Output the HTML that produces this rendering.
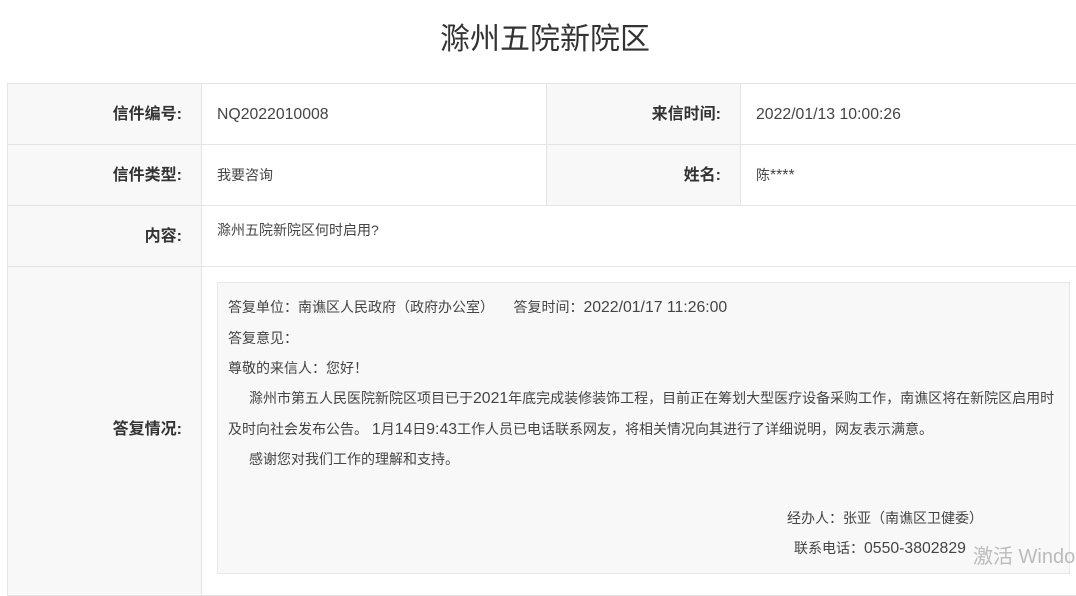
<!DOCTYPE html>
<html><head><meta charset="utf-8"><style>
*{margin:0;padding:0;box-sizing:border-box}
body{width:1076px;height:577px;overflow:hidden;background:#fff;position:relative;font-family:"Liberation Sans","Noto Sans CJK SC",sans-serif;color:#333}
.a{position:absolute;white-space:nowrap}
.t{left:0;width:1090px;top:18px;text-align:center;font-size:30px;color:#333;line-height:44px}
.l{background:#f8f8f9;border:1px solid #e4e4e6;position:absolute}
.v{background:#fff;border:1px solid #e4e4e6;position:absolute}
.lb{font-size:16px;font-weight:bold;text-align:right;color:#333;line-height:20px}
.vl{font-size:14px;color:#444;line-height:20px}
.n{font-size:15.8px}
</style></head><body>
<div class="a t">滁州五院新院区</div>
<div class="l" style="left:7px;top:83px;width:195px;height:62px"></div>
<div class="v" style="left:201px;top:83px;width:346px;height:62px"></div>
<div class="l" style="left:546px;top:83px;width:195px;height:62px"></div>
<div class="v" style="left:740px;top:83px;width:346px;height:62px"></div>
<div class="l" style="left:7px;top:144px;width:195px;height:62px"></div>
<div class="v" style="left:201px;top:144px;width:346px;height:62px"></div>
<div class="l" style="left:546px;top:144px;width:195px;height:62px"></div>
<div class="v" style="left:740px;top:144px;width:346px;height:62px"></div>
<div class="l" style="left:7px;top:205px;width:195px;height:62px"></div>
<div class="v" style="left:201px;top:205px;width:885px;height:62px"></div>
<div class="l" style="left:7px;top:266px;width:195px;height:330px"></div>
<div class="v" style="left:201px;top:266px;width:885px;height:330px"></div>
<div class="a" style="left:217px;top:282px;width:853px;height:292px;background:#f8f8f9;border:1px solid #e8e8ea"></div>

<div class="a lb" style="right:894px;top:105px">信件编号:</div>
<div class="a vl" style="left:217px;top:104px"><span class="n">NQ2022010008</span></div>
<div class="a lb" style="right:355px;top:105px">来信时间:</div>
<div class="a vl" style="left:756px;top:104px"><span class="n">2022/01/13 10:00:26</span></div>
<div class="a lb" style="right:894px;top:166px">信件类型:</div>
<div class="a vl" style="left:217px;top:165px">我要咨询</div>
<div class="a lb" style="right:355px;top:166px">姓名:</div>
<div class="a vl" style="left:756px;top:165px">陈<span class="n">****</span></div>
<div class="a lb" style="right:894px;top:227px">内容:</div>
<div class="a vl" style="left:217px;top:220px">滁州五院新院区何时启用?</div>
<div class="a lb" style="right:894px;top:420px">答复情况:</div>

<div class="a vl" style="left:228px;top:297px">答复单位：南谯区人民政府（政府办公室）&nbsp;&nbsp;&nbsp;&nbsp;&nbsp;答复时间：<span class="n">2022/01/17 11:26:00</span></div>
<div class="a vl" style="left:228px;top:328px">答复意见：</div>
<div class="a vl" style="left:228px;top:358px">尊敬的来信人：您好！</div>
<div class="a vl" style="left:249px;top:388px">滁州市第五人民医院新院区项目已于<span class="n">2021</span>年底完成装修装饰工程，目前正在筹划大型医疗设备采购工作，南谯区将在新院区启用时</div>
<div class="a vl" style="left:228px;top:419px">及时向社会发布公告。 <span class="n">1</span>月<span class="n">14</span>日<span class="n">9:43</span>工作人员已电话联系网友，将相关情况向其进行了详细说明，网友表示满意。</div>
<div class="a vl" style="left:249px;top:449px">感谢您对我们工作的理解和支持。</div>
<div class="a vl" style="left:787px;top:508px">经办人：张亚（南谯区卫健委）</div>
<div class="a vl" style="left:794px;top:538px">联系电话：<span class="n">0550-3802829</span></div>
<div class="a" style="left:973px;top:540px;font-size:20px;color:#bbb">激活 Windo</div>
</body></html>
